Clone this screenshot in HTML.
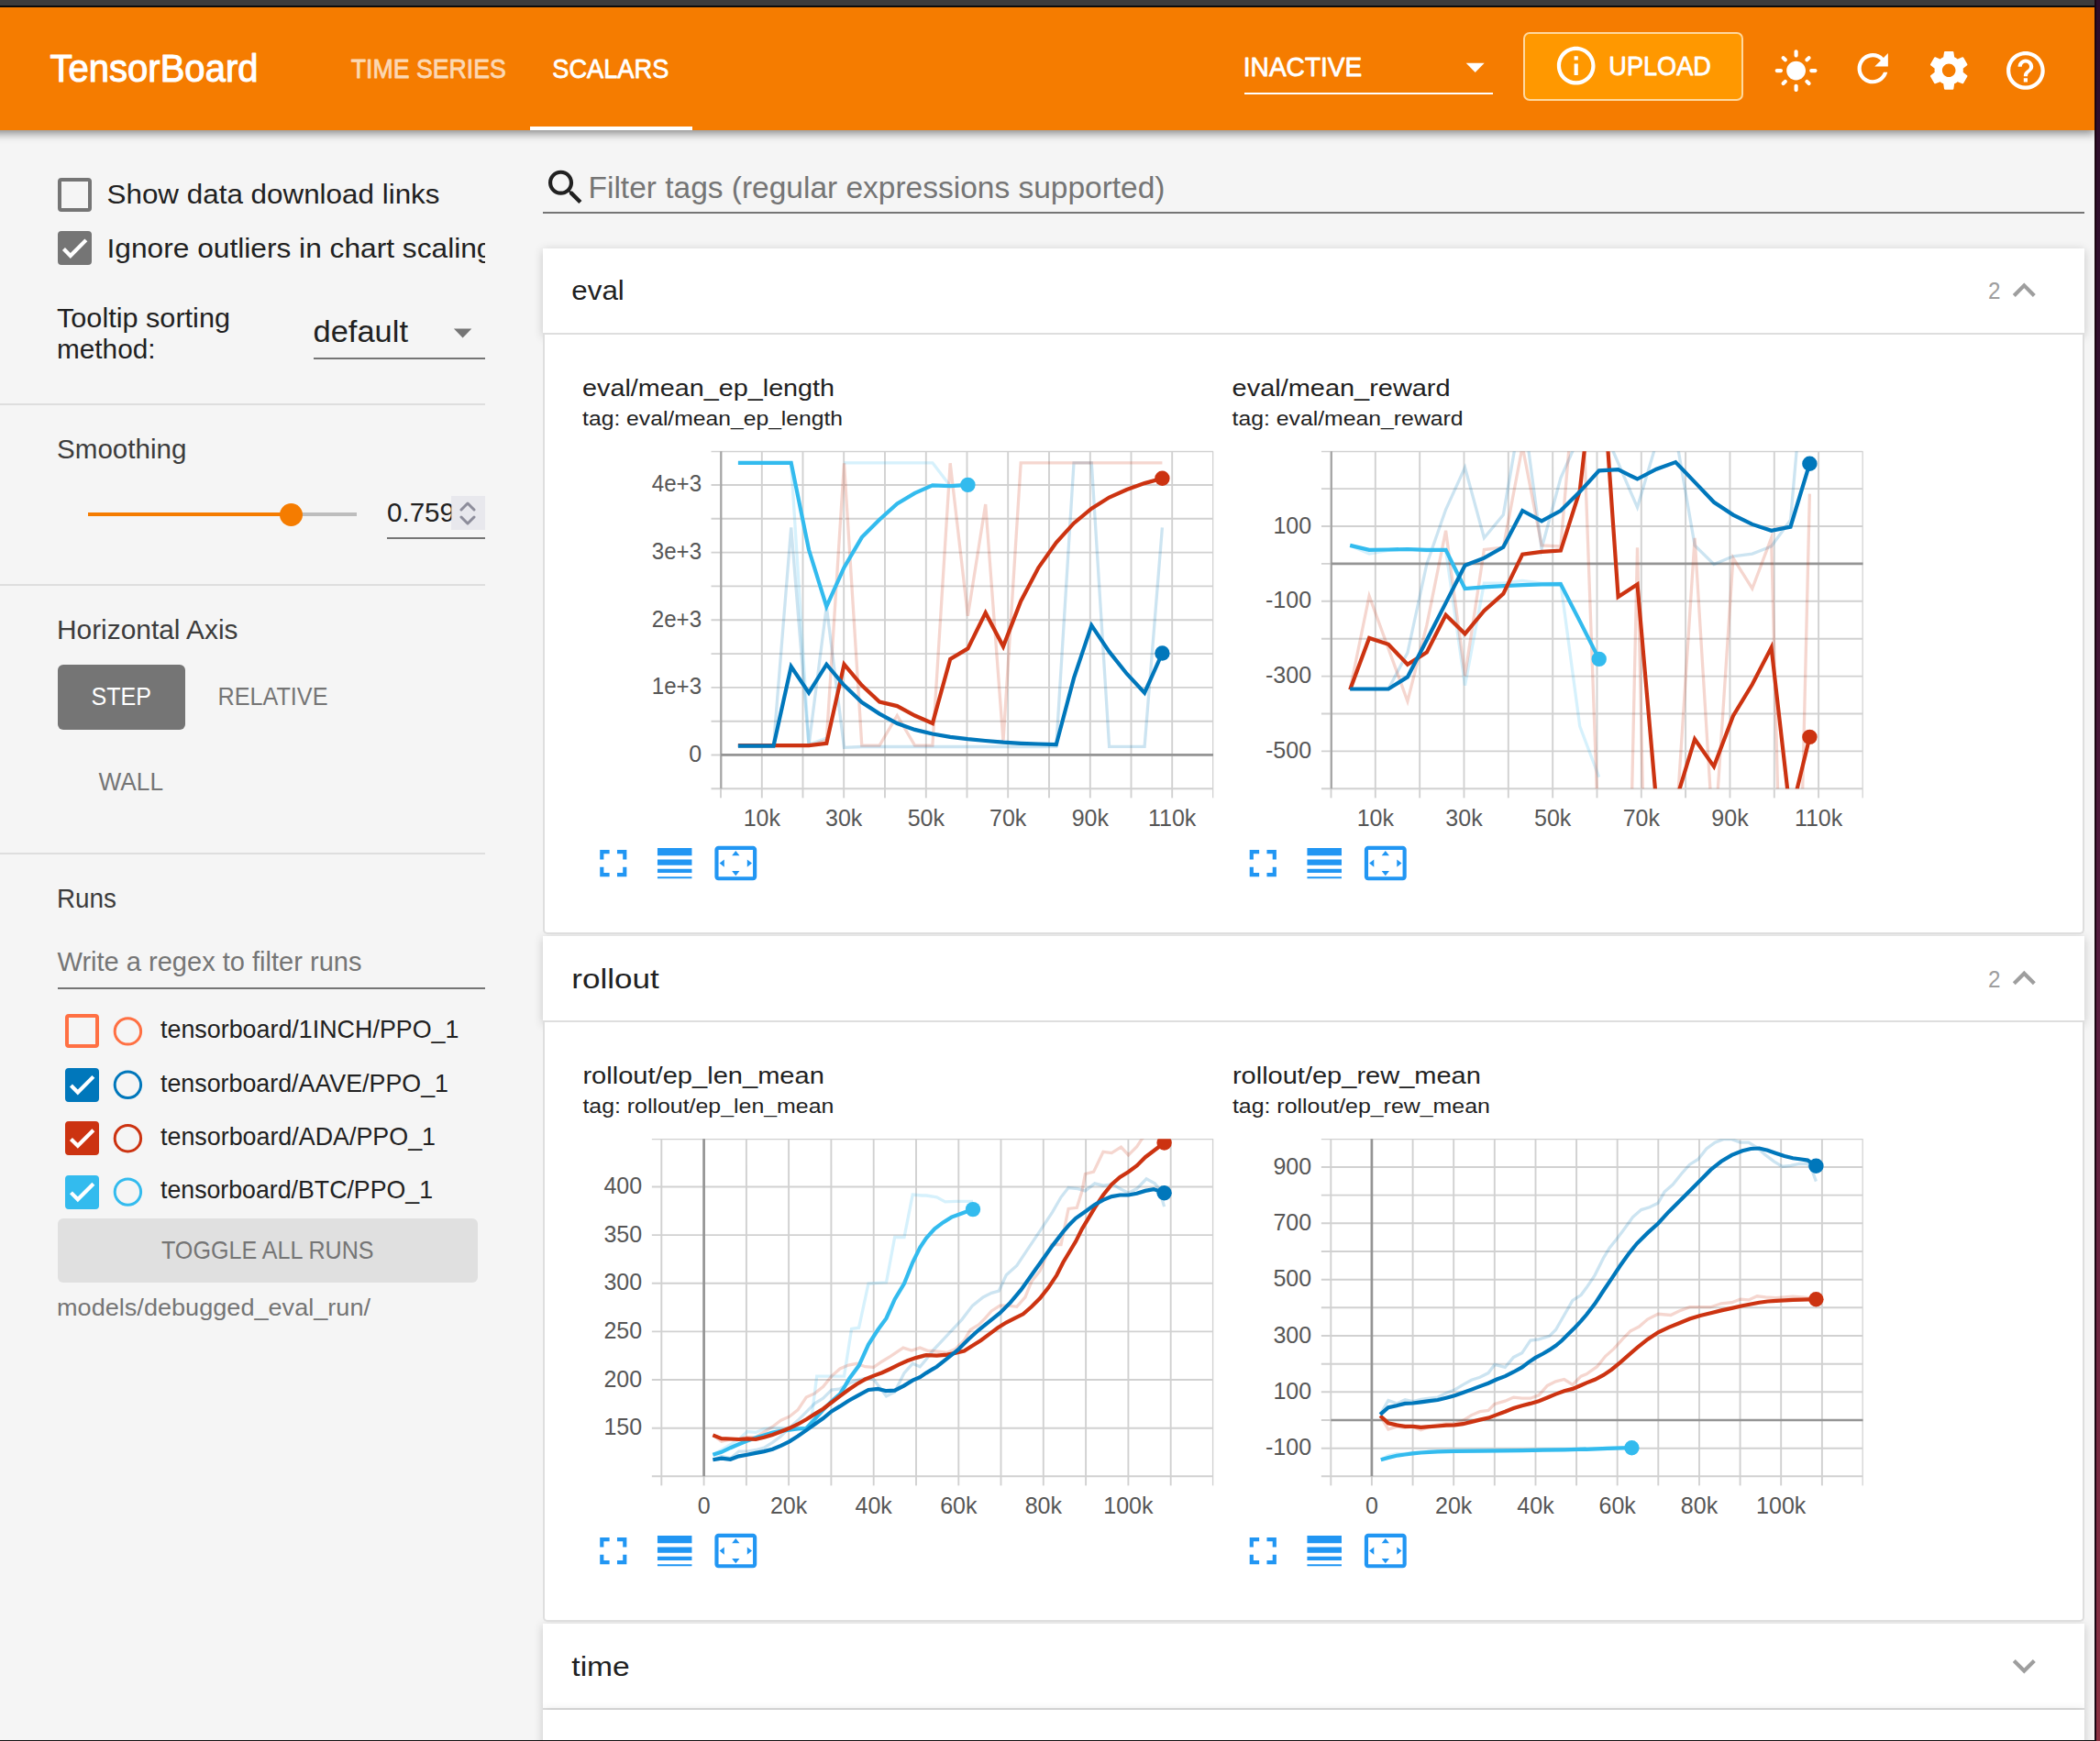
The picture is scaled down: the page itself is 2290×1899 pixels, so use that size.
<!DOCTYPE html>
<html lang="en"><head><meta charset="utf-8"><title>TensorBoard</title>
<style>
html,body{margin:0;padding:0}
body{width:2290px;height:1899px;position:relative;overflow:hidden;background:#f5f5f5;font-family:"Liberation Sans", "DejaVu Sans", sans-serif}
div{position:absolute;box-sizing:border-box}
#win-top{left:0;top:0;width:2290px;height:8px;background:#3c3c3c;border-bottom:2px solid #0b0b0b;z-index:9}
#win-right{left:2284px;top:0;width:6px;height:1899px;background:linear-gradient(180deg,#2c0d2a 0%,#35102f 25%,#541b3e 55%,#70263f 80%,#8c3143 100%);border-left:2px solid #1c0512;z-index:9}
#win-bottom{left:0;top:1897.6px;width:2286px;height:1.4px;background:#111;z-index:10}
#header{left:-30px;top:8px;width:2314px;height:134px;background:#f57c00;box-shadow:0 4px 9px rgba(0,0,0,.42);z-index:3}
#tabline{left:608px;top:129.5px;width:177px;height:4.5px;background:#fff}
#envline{left:1387px;top:92.5px;width:270.5px;height:2px;background:#fff}
#upload{left:1690.5px;top:26.5px;width:240px;height:75px;background:#ff9800;border:2px solid rgba(255,255,255,.62);border-radius:7px}
.cb{width:37px;height:37px;border-radius:4px;border:4px solid #757575}
.cb.on{background:#757575}
.hr{left:0;width:529px;height:2px;background:#dedede}
.ul{height:2px;background:#757575}
.rcb{left:71px;width:37px;height:37px;border-radius:4px;border:4.5px solid}
.card-h{left:592px;width:1681.4px;height:94.2px;background:#fff;box-shadow:0 2px 10px rgba(0,0,0,.19);border-bottom:2.2px solid #dedede;z-index:1}
.card-b{left:592px;width:1681.4px;background:#fff;border:2.2px solid #dedede;border-top:none;border-radius:0 0 5px 5px;z-index:2}
svg#ov{position:absolute;left:0;top:0;z-index:5;font-family:"Liberation Sans", "DejaVu Sans", sans-serif}
</style></head><body>
<div id="win-top"></div><div id="win-right"></div><div id="win-bottom"></div>
<div id="header"><div id="tabline"></div><div id="envline"></div><div id="upload"></div></div>
<div class="cb" style="left:63px;top:194px"></div>
<div class="cb on" style="left:63px;top:252.3px"></div>
<div class="ul" style="left:342px;top:389.6px;width:187px"></div>
<div class="hr" style="top:439.6px"></div>
<div style="left:96px;top:559px;width:222px;height:4.4px;background:#f57c00"></div>
<div style="left:318px;top:559px;width:70.6px;height:4.4px;background:#bdbdbd"></div>
<div style="left:305.1px;top:548.5px;width:25.4px;height:25.4px;border-radius:50%;background:#f57c00"></div>
<div style="left:492.3px;top:541.4px;width:36.7px;height:36.2px;background:#e8e8ed"></div>
<div class="ul" style="left:422px;top:586px;width:107px"></div>
<div class="hr" style="top:636.7px"></div>
<div style="left:62.9px;top:725.1px;width:139.3px;height:70.6px;background:#757575;border-radius:6px"></div>
<div class="hr" style="top:930.1px"></div>
<div class="ul" style="left:62.9px;top:1076.7px;width:466px"></div>
<div class="rcb" style="top:1106.4px;border-color:#ff7043;"></div>
<div class="rcb" style="top:1164.8px;border-color:#0077bb;background:#0077bb;"></div>
<div class="rcb" style="top:1223.2px;border-color:#cc3311;background:#cc3311;"></div>
<div class="rcb" style="top:1281.6px;border-color:#33bbee;background:#33bbee;"></div>
<div style="left:62.9px;top:1329.4px;width:458px;height:70px;background:#e0e0e0;border-radius:6px"></div>
<div class="ul" style="left:592px;top:231.2px;width:1681px"></div>
<div class="card-h" style="top:270.8px"></div><div class="card-b" style="top:365px;height:653.6px"></div>
<div class="card-h" style="top:1021.1px"></div><div class="card-b" style="top:1115.3px;height:653.3px"></div>
<div class="card-h" style="top:1771.1px"></div>
<div class="card-h" style="top:1865.3px;z-index:2"></div>
<svg id="ov" width="2290" height="1899" viewBox="0 0 2290 1899"><defs><clipPath id="gp0"><rect x="775.2" y="491.8" width="548.1" height="378.9"/></clipPath><clipPath id="cp0"><rect x="786.0" y="492.2" width="537.0" height="368.1"/></clipPath><clipPath id="gp1"><rect x="1440.7" y="491.8" width="591.1" height="378.9"/></clipPath><clipPath id="cp1"><rect x="1451.5" y="492.2" width="580.0" height="368.1"/></clipPath><clipPath id="gp2"><rect x="710.5" y="1242.0" width="612.8" height="378.8"/></clipPath><clipPath id="cp2"><rect x="721.3" y="1242.3" width="601.7" height="368.0"/></clipPath><clipPath id="gp3"><rect x="1440.5" y="1242.0" width="591.3" height="378.8"/></clipPath><clipPath id="cp3"><rect x="1451.3" y="1242.3" width="580.2" height="368.0"/></clipPath><clipPath id="numclip"><rect x="400" y="530" width="92.3" height="60"/></clipPath><clipPath id="sbclip"><rect x="0" y="240" width="529" height="60"/></clipPath></defs>
<text x="54.5" y="88.6" font-size="41.7" fill="#fff" textLength="227.0" lengthAdjust="spacingAndGlyphs" stroke="#fff" stroke-width="1.1" stroke-linejoin="round">TensorBoard</text>
<text x="382.8" y="85.0" font-size="29.2" fill="#fff" textLength="169.0" lengthAdjust="spacingAndGlyphs" stroke="#fff" stroke-width="0.8" stroke-linejoin="round" opacity="0.7">TIME SERIES</text>
<text x="602.3" y="85.0" font-size="29.2" fill="#fff" textLength="127.0" lengthAdjust="spacingAndGlyphs" stroke="#fff" stroke-width="0.8" stroke-linejoin="round">SCALARS</text>
<text x="1355.8" y="82.5" font-size="29.2" fill="#fff" textLength="129.5" lengthAdjust="spacingAndGlyphs" stroke="#fff" stroke-width="0.8" stroke-linejoin="round">INACTIVE</text>
<text x="1754.3" y="82.0" font-size="29.2" fill="#fff" textLength="111.5" lengthAdjust="spacingAndGlyphs" stroke="#fff" stroke-width="0.8" stroke-linejoin="round">UPLOAD</text>
<path transform="translate(1693.70 46.70) scale(2.0833)" fill="#fff" d="M11 17h2v-6h-2v6zm1-15C6.48 2 2 6.48 2 12s4.48 10 10 10 10-4.48 10-10S17.52 2 12 2zm0 18c-4.41 0-8-3.59-8-8s3.59-8 8-8 8 3.59 8 8-3.59 8-8 8zM11 9h2V7h-2v2z"/>
<path transform="translate(1933.60 52.10) scale(2.0833)" fill="#fff" d="M12,7c-2.76,0-5,2.24-5,5s2.24,5,5,5s5-2.24,5-5S14.76,7,12,7L12,7z M2,13l2,0c0.55,0,1-0.45,1-1s-0.45-1-1-1l-2,0 c-0.55,0-1,0.45-1,1S1.45,13,2,13z M20,13l2,0c0.55,0,1-0.45,1-1s-0.45-1-1-1l-2,0c-0.55,0-1,0.45-1,1S19.45,13,20,13z M11,2v2 c0,0.55,0.45,1,1,1s1-0.45,1-1V2c0-0.55-0.45-1-1-1S11,1.45,11,2z M11,20v2c0,0.55,0.45,1,1,1s1-0.45,1-1v-2c0-0.55-0.45-1-1-1 C11.45,19,11,19.45,11,20z M5.99,4.58c-0.39-0.39-1.03-0.39-1.41,0c-0.39,0.39-0.39,1.03,0,1.41l1.06,1.06 c0.39,0.39,1.03,0.39,1.41,0s0.39-1.03,0-1.41L5.99,4.58z M18.36,16.95c-0.39-0.39-1.03-0.39-1.41,0c-0.39,0.39-0.39,1.03,0,1.41 l1.06,1.06c0.39,0.39,1.03,0.39,1.41,0c0.39-0.39,0.39-1.03,0-1.41L18.36,16.95z M19.42,5.99c0.39-0.39,0.39-1.03,0-1.41 c-0.39-0.39-1.03-0.39-1.41,0l-1.06,1.06c-0.39,0.39-0.39,1.03,0,1.41s1.03,0.39,1.41,0L19.42,5.99z M7.05,18.36 c0.39-0.39,0.39-1.03,0-1.41c-0.39-0.39-1.03-0.39-1.41,0l-1.06,1.06c-0.39,0.39-0.39,1.03,0,1.41s1.03,0.39,1.41,0L7.05,18.36z"/>
<path transform="translate(2017.20 49.70) scale(2.0833)" fill="#fff" d="M17.65 6.35C16.2 4.9 14.21 4 12 4c-4.42 0-7.99 3.58-7.99 8s3.57 8 7.99 8c3.73 0 6.84-2.55 7.73-6h-2.08c-.82 2.33-3.04 4-5.65 4-3.31 0-6-2.69-6-6s2.69-6 6-6c1.66 0 3.14.69 4.22 1.78L13 11h7V4l-2.35 2.35z"/>
<path transform="translate(2100.20 51.80) scale(2.0833)" fill="#fff" d="M19.43 12.98c.04-.32.07-.64.07-.98s-.03-.66-.07-.98l2.11-1.65c.19-.15.24-.42.12-.64l-2-3.46c-.12-.22-.39-.3-.61-.22l-2.49 1c-.52-.4-1.08-.73-1.69-.98l-.38-2.65C14.46 2.18 14.25 2 14 2h-4c-.25 0-.46.18-.49.42l-.38 2.65c-.61.25-1.17.59-1.69.98l-2.49-1c-.23-.09-.49 0-.61.22l-2 3.46c-.13.22-.07.49.12.64l2.11 1.65c-.04.32-.07.65-.07.98s.03.66.07.98l-2.11 1.65c-.19.15-.24.42-.12.64l2 3.46c.12.22.39.3.61.22l2.49-1c.52.4 1.08.73 1.69.98l.38 2.65c.03.24.24.42.49.42h4c.25 0 .46-.18.49-.42l.38-2.65c.61-.25 1.17-.59 1.69-.98l2.49 1c.23.09.49 0 .61-.22l2-3.46c.12-.22.07-.49-.12-.64l-2.11-1.65zM12 15.5c-1.93 0-3.5-1.57-3.5-3.5s1.57-3.5 3.5-3.5 3.5 1.57 3.5 3.5-1.57 3.5-3.5 3.5z"/>
<path transform="translate(2183.90 51.90) scale(2.0833)" fill="#fff" d="M11 18h2v-2h-2v2zm1-16C6.48 2 2 6.48 2 12s4.48 10 10 10 10-4.48 10-10S17.52 2 12 2zm0 18c-4.41 0-8-3.59-8-8s3.59-8 8-8 8 3.59 8 8-3.59 8-8 8zm0-14c-2.21 0-4 1.79-4 4h2c0-1.1.9-2 2-2s2 .9 2 2c0 2-3 1.75-3 5h2c0-2.25 3-2.5 3-5 0-2.21-1.79-4-4-4z"/>
<path d="M1598.7 68.7h20l-10 10.3z" fill="#fff"/>
<text x="116.5" y="222.3" font-size="29.2" fill="#212121" textLength="363.0" lengthAdjust="spacingAndGlyphs">Show data download links</text>
<text x="116.5" y="281.4" font-size="29.2" fill="#212121" textLength="421.0" lengthAdjust="spacingAndGlyphs" clip-path="url(#sbclip)">Ignore outliers in chart scaling</text>
<polyline points="69.47,271.58 76.81,278.93 93.84,261.89" fill="none" stroke="#fff" stroke-width="4.2"/>
<text x="62.0" y="357.0" font-size="29.2" fill="#212121" textLength="189.0" lengthAdjust="spacingAndGlyphs">Tooltip sorting</text>
<text x="62.0" y="391.4" font-size="29.2" fill="#212121" textLength="107.5" lengthAdjust="spacingAndGlyphs">method:</text>
<text x="341.5" y="372.9" font-size="33.3" fill="#212121" textLength="103.5" lengthAdjust="spacingAndGlyphs">default</text>
<path d="M494.9 358.6h19.4l-9.7 10z" fill="#757575"/>
<text x="62.0" y="500.0" font-size="29.2" fill="#3c3c3c" textLength="141.5" lengthAdjust="spacingAndGlyphs">Smoothing</text>
<text x="422.0" y="569.3" font-size="29.2" fill="#212121" textLength="74.0" lengthAdjust="spacingAndGlyphs" clip-path="url(#numclip)">0.759</text>
<path d="M503 556l7-7 7 7M503 564l7 7 7-7" fill="none" stroke="#8d8d9b" stroke-width="3" stroke-linecap="round" stroke-linejoin="round"/>
<text x="62.0" y="697.0" font-size="29.2" fill="#3c3c3c" textLength="197.5" lengthAdjust="spacingAndGlyphs">Horizontal Axis</text>
<text x="99.5" y="769.1" font-size="27.1" fill="#fff" textLength="65.5" lengthAdjust="spacingAndGlyphs">STEP</text>
<text x="237.5" y="769.1" font-size="27.1" fill="#757575" textLength="120.0" lengthAdjust="spacingAndGlyphs">RELATIVE</text>
<text x="107.5" y="862.3" font-size="27.1" fill="#757575" textLength="70.5" lengthAdjust="spacingAndGlyphs">WALL</text>
<text x="62.0" y="990.0" font-size="29.2" fill="#3c3c3c" textLength="65.0" lengthAdjust="spacingAndGlyphs">Runs</text>
<text x="62.5" y="1059.1" font-size="29.2" fill="#757575" textLength="332.0" lengthAdjust="spacingAndGlyphs">Write a regex to filter runs</text>
<text x="175.0" y="1132.2" font-size="27.1" fill="#212121" textLength="325.5" lengthAdjust="spacingAndGlyphs">tensorboard/1INCH/PPO_1</text>
<circle cx="139.4" cy="1124.9" r="14.2" fill="none" stroke="#ff7043" stroke-width="3"/>
<text x="175.0" y="1190.6" font-size="27.1" fill="#212121" textLength="314.0" lengthAdjust="spacingAndGlyphs">tensorboard/AAVE/PPO_1</text>
<circle cx="139.4" cy="1183.3" r="14.2" fill="none" stroke="#0077bb" stroke-width="3"/>
<polyline points="77.47,1184.08 84.81,1191.43 101.84,1174.39" fill="none" stroke="#fff" stroke-width="4.2"/>
<text x="175.0" y="1249.0" font-size="27.1" fill="#212121" textLength="300.0" lengthAdjust="spacingAndGlyphs">tensorboard/ADA/PPO_1</text>
<circle cx="139.4" cy="1241.7" r="14.2" fill="none" stroke="#cc3311" stroke-width="3"/>
<polyline points="77.47,1242.48 84.81,1249.83 101.84,1232.79" fill="none" stroke="#fff" stroke-width="4.2"/>
<text x="175.0" y="1307.4" font-size="27.1" fill="#212121" textLength="297.0" lengthAdjust="spacingAndGlyphs">tensorboard/BTC/PPO_1</text>
<circle cx="139.4" cy="1300.1" r="14.2" fill="none" stroke="#33bbee" stroke-width="3"/>
<polyline points="77.47,1300.88 84.81,1308.23 101.84,1291.19" fill="none" stroke="#fff" stroke-width="4.2"/>
<text x="176.0" y="1372.9" font-size="27.1" fill="#757575" textLength="231.5" lengthAdjust="spacingAndGlyphs">TOGGLE ALL RUNS</text>
<text x="62.0" y="1434.9" font-size="25" fill="#757575" textLength="342.0" lengthAdjust="spacingAndGlyphs">models/debugged_eval_run/</text>
<path transform="translate(591.75 179.40) scale(2.0833)" fill="#212121" d="M15.5 14h-.79l-.28-.27C15.41 12.59 16 11.11 16 9.5 16 5.91 13.09 3 9.5 3S3 5.91 3 9.5 5.91 16 9.5 16c1.61 0 3.09-.59 4.23-1.57l.27.28v.79l5 4.99L20.49 19l-4.99-5zm-6 0C7.01 14 5 11.99 5 9.5S7.01 5 9.5 5 14 7.01 14 9.5 11.99 14 9.5 14z"/>
<text x="641.5" y="215.6" font-size="33.3" fill="#757575" textLength="629.0" lengthAdjust="spacingAndGlyphs">Filter tags (regular expressions supported)</text>
<text x="623.3" y="327.3" font-size="29.2" fill="#212121" textLength="57.5" lengthAdjust="spacingAndGlyphs">eval</text>
<text x="2168.0" y="326.2" font-size="25" fill="#9e9e9e" textLength="13.5" lengthAdjust="spacingAndGlyphs">2</text>
<path transform="translate(2182.30 291.80) scale(2.0833)" fill="#9e9e9e" d="M12 8l-6 6 1.41 1.41L12 10.83l4.59 4.58L18 14z"/>
<text x="623.3" y="1077.6" font-size="29.2" fill="#212121" textLength="95.5" lengthAdjust="spacingAndGlyphs">rollout</text>
<text x="2168.0" y="1076.5" font-size="25" fill="#9e9e9e" textLength="13.5" lengthAdjust="spacingAndGlyphs">2</text>
<path transform="translate(2182.30 1042.10) scale(2.0833)" fill="#9e9e9e" d="M12 8l-6 6 1.41 1.41L12 10.83l4.59 4.58L18 14z"/>
<text x="623.3" y="1827.6" font-size="29.2" fill="#212121" textLength="63.5" lengthAdjust="spacingAndGlyphs">time</text>
<path transform="translate(2182.30 1792.10) scale(2.0833)" fill="#9e9e9e" d="M16.59 8.59L12 13.17 7.41 8.59 6 10l6 6 6-6z"/>
<text x="635.1" y="432.1" font-size="25" fill="#212121" textLength="275.0" lengthAdjust="spacingAndGlyphs">eval/mean_ep_length</text>
<text x="635.1" y="464.2" font-size="22.9" fill="#212121" textLength="284.0" lengthAdjust="spacingAndGlyphs">tag: eval/mean_ep_length</text>
<path clip-path="url(#gp0)" d="M786.0 492.2V870.6M830.8 492.2V870.6M875.5 492.2V870.6M920.2 492.2V870.6M965.0 492.2V870.6M1009.8 492.2V870.6M1054.5 492.2V870.6M1099.2 492.2V870.6M1144.0 492.2V870.6M1188.8 492.2V870.6M1233.5 492.2V870.6M1278.2 492.2V870.6M1323.0 492.2V870.6M775.4 492.2H1323.0M775.4 529.0H1323.0M775.4 565.8H1323.0M775.4 602.6H1323.0M775.4 639.4H1323.0M775.4 676.2H1323.0M775.4 713.1H1323.0M775.4 749.9H1323.0M775.4 786.7H1323.0M775.4 823.5H1323.0M775.4 860.3H1323.0" fill="none" stroke="#3c3c3c" stroke-opacity="0.235" stroke-width="1.9"/>
<path d="M786.35 492.2V860.3" fill="none" stroke="#a4a4a4" stroke-width="2.1"/>
<path d="M786.0 823.4H1323.0" fill="none" stroke="#959595" stroke-width="2.7"/>
<text x="765.1" y="536.4" font-size="25" fill="#565656" textLength="54.3" lengthAdjust="spacingAndGlyphs" text-anchor="end">4e+3</text>
<text x="765.1" y="610.0" font-size="25" fill="#565656" textLength="54.3" lengthAdjust="spacingAndGlyphs" text-anchor="end">3e+3</text>
<text x="765.1" y="683.6" font-size="25" fill="#565656" textLength="54.3" lengthAdjust="spacingAndGlyphs" text-anchor="end">2e+3</text>
<text x="765.1" y="757.3" font-size="25" fill="#565656" textLength="54.3" lengthAdjust="spacingAndGlyphs" text-anchor="end">1e+3</text>
<text x="765.1" y="831.0" font-size="25" fill="#565656" text-anchor="end">0</text>
<text x="830.8" y="900.9" font-size="25" fill="#565656" text-anchor="middle">10k</text>
<text x="920.2" y="900.9" font-size="25" fill="#565656" text-anchor="middle">30k</text>
<text x="1009.8" y="900.9" font-size="25" fill="#565656" text-anchor="middle">50k</text>
<text x="1099.2" y="900.9" font-size="25" fill="#565656" text-anchor="middle">70k</text>
<text x="1188.8" y="900.9" font-size="25" fill="#565656" text-anchor="middle">90k</text>
<text x="1278.2" y="900.9" font-size="25" fill="#565656" text-anchor="middle">110k</text>
<g clip-path="url(#cp0)" fill="none" stroke-linejoin="miter" stroke-miterlimit="6">
<polyline points="804.9,504.8 824.2,504.8 843.5,504.8 862.7,504.8 882.0,812.0 901.3,805.1" stroke="#33bbee" stroke-opacity="0.2" stroke-width="3.3"/>
<polyline points="920.5,504.8 939.8,504.8 959.1,504.8 978.3,504.8 997.6,504.8 1016.9,504.8 1036.2,530.1 1055.4,528.9" stroke="#33bbee" stroke-opacity="0.2" stroke-width="3.3"/>
<polyline points="804.9,813.6 824.2,813.6 843.5,813.6 862.7,575.3 882.0,813.1 901.3,661.5 920.5,815.4 939.8,814.5 959.1,814.5 978.3,814.5 997.6,814.5 1016.9,814.5 1036.2,814.5 1055.4,814.5 1074.7,814.5 1094.0,814.5 1113.2,814.5 1132.5,814.5 1151.8,814.3 1171.0,504.8 1190.3,504.8 1209.6,814.3 1228.8,814.3 1248.1,814.3 1267.4,575.3" stroke="#0077bb" stroke-opacity="0.2" stroke-width="3.3"/>
<polyline points="804.9,813.1 824.2,813.1 843.5,813.1 862.7,813.1 882.0,813.1 901.3,807.4 920.5,505.3 939.8,813.1 959.1,813.1 978.3,780.5 997.6,813.1 1016.9,813.1 1036.2,505.3 1055.4,671.8 1074.7,550.1 1094.0,808.5 1113.2,504.8 1132.5,504.8 1151.8,504.8 1171.0,504.8 1190.3,504.8 1209.6,504.8 1228.8,504.8 1248.1,504.8 1267.4,504.8" stroke="#cc3311" stroke-opacity="0.2" stroke-width="3.3"/>
<polyline points="804.9,504.8 824.2,504.8 843.5,504.8 862.7,504.8 882.0,599.5 901.3,661.5 920.5,619.0 939.8,586.1 959.1,566.8 978.3,549.4 997.6,537.9 1016.9,529.4 1036.2,530.1 1055.4,528.9" stroke="#33bbee" stroke-width="4.2"/>
<polyline points="804.9,813.1 824.2,813.1 843.5,813.1 862.7,813.1 882.0,813.1 901.3,810.8 920.5,724.7 939.8,747.6 959.1,765.6 978.3,770.1 997.6,780.5 1016.9,789.0 1036.2,718.9 1055.4,707.4 1074.7,668.4 1094.0,705.1 1113.2,655.7 1132.5,619.0 1151.8,591.9 1171.0,570.7 1190.3,554.7 1209.6,542.5 1228.8,534.0 1248.1,527.1 1267.4,521.8" stroke="#cc3311" stroke-width="4.2"/>
<polyline points="804.9,813.6 824.2,813.6 843.5,813.6 862.7,727.0 882.0,755.7 901.3,724.7 920.5,747.6 939.8,766.0 959.1,778.6 978.3,789.0 997.6,795.9 1016.9,800.5 1036.2,803.9 1055.4,806.2 1074.7,808.0 1094.0,809.7 1113.2,810.8 1132.5,811.5 1151.8,812.2 1171.0,739.6 1190.3,682.2 1209.6,710.9 1228.8,735.0 1248.1,755.7 1267.4,712.5" stroke="#0077bb" stroke-width="4.2"/>
<circle cx="1055.4" cy="528.9" r="8.2" fill="#33bbee" stroke="none"/>
<circle cx="1267.4" cy="521.8" r="8.2" fill="#cc3311" stroke="none"/>
<circle cx="1267.4" cy="712.5" r="8.2" fill="#0077bb" stroke="none"/>
</g>
<path transform="translate(643.80 916.60) scale(2.0833)" fill="#2196f3" d="M7 14H5v5h5v-2H7v-3zm-2-4h2V7h3V5H5v5zm12 7h-3v2h5v-5h-2v3zM14 5v2h3v3h2V5h-5z"/>
<path transform="translate(710.70 916.60) scale(2.0833)" fill="#2196f3" d="M3 17h18v-2H3v2zm0 3h18v-1H3v1zm0-7h18v-3H3v3zm0-9v4h18V4H3z"/>
<path transform="translate(777.30 916.60) scale(2.0833)" fill="#2196f3" d="M12.01 5.5L10 8h4l-1.99-2.5zM18 10v4l2.5-1.99L18 10zM6 10l-2.5 2.01L6 14v-4zm8 6h-4l2.01 2.5L14 16zm7-13H3c-1.1 0-2 .9-2 2v14c0 1.1.9 2 2 2h18c1.1 0 2-.9 2-2V5c0-1.1-.9-2-2-2zm0 16.01H3V4.99h18v14.02z"/>
<text x="1343.6" y="432.1" font-size="25" fill="#212121" textLength="238.0" lengthAdjust="spacingAndGlyphs">eval/mean_reward</text>
<text x="1343.6" y="464.2" font-size="22.9" fill="#212121" textLength="252.0" lengthAdjust="spacingAndGlyphs">tag: eval/mean_reward</text>
<path clip-path="url(#gp1)" d="M1451.5 492.2V870.6M1499.8 492.2V870.6M1548.2 492.2V870.6M1596.5 492.2V870.6M1644.8 492.2V870.6M1693.2 492.2V870.6M1741.5 492.2V870.6M1789.8 492.2V870.6M1838.1 492.2V870.6M1886.5 492.2V870.6M1934.8 492.2V870.6M1983.1 492.2V870.6M2031.5 492.2V870.6M1440.9 492.2H2031.5M1440.9 533.1H2031.5M1440.9 574.0H2031.5M1440.9 614.9H2031.5M1440.9 655.8H2031.5M1440.9 696.7H2031.5M1440.9 737.6H2031.5M1440.9 778.5H2031.5M1440.9 819.4H2031.5M1440.9 860.3H2031.5" fill="none" stroke="#3c3c3c" stroke-opacity="0.235" stroke-width="1.9"/>
<path d="M1451.85 492.2V860.3" fill="none" stroke="#a4a4a4" stroke-width="2.1"/>
<path d="M1451.5 614.9H2031.5" fill="none" stroke="#959595" stroke-width="2.7"/>
<text x="1430.1" y="581.6" font-size="25" fill="#565656" text-anchor="end">100</text>
<text x="1430.1" y="663.4" font-size="25" fill="#565656" text-anchor="end">-100</text>
<text x="1430.1" y="745.2" font-size="25" fill="#565656" text-anchor="end">-300</text>
<text x="1430.1" y="827.0" font-size="25" fill="#565656" text-anchor="end">-500</text>
<text x="1499.8" y="900.9" font-size="25" fill="#565656" text-anchor="middle">10k</text>
<text x="1596.5" y="900.9" font-size="25" fill="#565656" text-anchor="middle">30k</text>
<text x="1693.2" y="900.9" font-size="25" fill="#565656" text-anchor="middle">50k</text>
<text x="1789.8" y="900.9" font-size="25" fill="#565656" text-anchor="middle">70k</text>
<text x="1886.5" y="900.9" font-size="25" fill="#565656" text-anchor="middle">90k</text>
<text x="1983.1" y="900.9" font-size="25" fill="#565656" text-anchor="middle">110k</text>
<g clip-path="url(#cp1)" fill="none" stroke-linejoin="miter" stroke-miterlimit="6">
<polyline points="1472.2,594.9 1493.1,604.1 1514.0,600.4 1534.9,599.5 1555.8,600.8 1576.6,599.9 1597.5,747.6 1618.4,636.2 1639.3,636.2 1660.2,633.5 1681.1,636.2 1701.9,636.2 1722.8,792.4 1743.7,847.6" stroke="#33bbee" stroke-opacity="0.2" stroke-width="3.3"/>
<polyline points="1472.2,751.5 1493.1,751.5 1514.0,751.5 1534.9,712.0 1555.8,615.5 1576.6,555.8 1597.5,509.9 1618.4,586.8 1639.3,561.6 1660.2,440.9 1681.1,598.3 1701.9,521.4 1722.8,474.3 1743.7,457.0 1764.6,505.0 1785.5,553.5 1806.3,483.2 1827.2,474.0 1848.1,594.9 1869.0,615.5 1889.9,606.8 1910.8,604.1 1931.6,596.0 1952.5,567.3 1973.4,329.5" stroke="#0077bb" stroke-opacity="0.2" stroke-width="3.3"/>
<polyline points="1472.2,752.2 1493.1,650.0 1514.0,707.4 1534.9,764.9 1555.8,682.2 1576.6,578.8 1597.5,737.3 1618.4,599.5 1639.3,597.2 1660.2,486.9 1681.1,594.9 1701.9,596.0 1722.8,349.5 1743.7,928.4 1764.6,1544.1 1785.5,597.2 1806.3,1536.7 1827.2,908.4 1848.1,586.8 1869.0,926.6 1889.9,608.6 1910.8,642.0 1931.6,586.8 1952.5,1415.0 1973.4,538.6" stroke="#cc3311" stroke-opacity="0.2" stroke-width="3.3"/>
<polyline points="1472.2,594.9 1493.1,599.9 1514.0,599.5 1534.9,599.0 1555.8,599.9 1576.6,599.9 1597.5,642.0 1618.4,640.3 1639.3,639.2 1660.2,638.1 1681.1,637.4 1701.9,637.1 1722.8,677.6 1743.7,718.9" stroke="#33bbee" stroke-width="4.2"/>
<polyline points="1472.2,752.2 1493.1,695.9 1514.0,702.8 1534.9,724.7 1555.8,711.6 1576.6,670.7 1597.5,691.3 1618.4,666.1 1639.3,647.7 1660.2,604.7 1681.1,601.8 1701.9,600.6 1722.8,535.1 1743.7,351.4 1764.6,651.1 1785.5,637.4 1806.3,876.5 1827.2,874.7 1848.1,806.2 1869.0,836.1 1889.9,780.9 1910.8,746.5 1931.6,706.3 1952.5,890.1 1973.4,803.9" stroke="#cc3311" stroke-width="4.2"/>
<polyline points="1472.2,751.5 1493.1,751.5 1514.0,751.5 1534.9,738.4 1555.8,698.2 1576.6,657.6 1597.5,616.7 1618.4,608.6 1639.3,596.7 1660.2,557.0 1681.1,568.4 1701.9,557.0 1722.8,536.3 1743.7,513.3 1764.6,512.2 1785.5,522.5 1806.3,511.7 1827.2,504.1 1848.1,525.9 1869.0,547.8 1889.9,561.6 1910.8,571.9 1931.6,578.8 1952.5,574.6 1973.4,505.7" stroke="#0077bb" stroke-width="4.2"/>
<circle cx="1743.7" cy="718.9" r="8.2" fill="#33bbee" stroke="none"/>
<circle cx="1973.4" cy="803.9" r="8.2" fill="#cc3311" stroke="none"/>
<circle cx="1973.4" cy="505.7" r="8.2" fill="#0077bb" stroke="none"/>
</g>
<path transform="translate(1352.30 916.60) scale(2.0833)" fill="#2196f3" d="M7 14H5v5h5v-2H7v-3zm-2-4h2V7h3V5H5v5zm12 7h-3v2h5v-5h-2v3zM14 5v2h3v3h2V5h-5z"/>
<path transform="translate(1419.20 916.60) scale(2.0833)" fill="#2196f3" d="M3 17h18v-2H3v2zm0 3h18v-1H3v1zm0-7h18v-3H3v3zm0-9v4h18V4H3z"/>
<path transform="translate(1485.80 916.60) scale(2.0833)" fill="#2196f3" d="M12.01 5.5L10 8h4l-1.99-2.5zM18 10v4l2.5-1.99L18 10zM6 10l-2.5 2.01L6 14v-4zm8 6h-4l2.01 2.5L14 16zm7-13H3c-1.1 0-2 .9-2 2v14c0 1.1.9 2 2 2h18c1.1 0 2-.9 2-2V5c0-1.1-.9-2-2-2zm0 16.01H3V4.99h18v14.02z"/>
<text x="635.4" y="1182.1" font-size="25" fill="#212121" textLength="263.5" lengthAdjust="spacingAndGlyphs">rollout/ep_len_mean</text>
<text x="635.4" y="1214.2" font-size="22.9" fill="#212121" textLength="274.0" lengthAdjust="spacingAndGlyphs">tag: rollout/ep_len_mean</text>
<path clip-path="url(#gp2)" d="M721.3 1242.3V1620.6M767.6 1242.3V1620.6M813.9 1242.3V1620.6M860.1 1242.3V1620.6M906.4 1242.3V1620.6M952.7 1242.3V1620.6M999.0 1242.3V1620.6M1045.3 1242.3V1620.6M1091.5 1242.3V1620.6M1137.8 1242.3V1620.6M1184.1 1242.3V1620.6M1230.4 1242.3V1620.6M1276.7 1242.3V1620.6M1322.9 1242.3V1620.6M710.7 1242.3H1323.0M710.7 1294.5H1323.0M710.7 1347.1H1323.0M710.7 1399.8H1323.0M710.7 1452.4H1323.0M710.7 1505.0H1323.0M710.7 1557.7H1323.0M710.7 1610.3H1323.0" fill="none" stroke="#3c3c3c" stroke-opacity="0.235" stroke-width="1.9"/>
<path d="M767.6 1242.3V1610.3" fill="none" stroke="#959595" stroke-width="2.7"/>
<text x="700.1" y="1302.1" font-size="25" fill="#565656" text-anchor="end">400</text>
<text x="700.1" y="1354.7" font-size="25" fill="#565656" text-anchor="end">350</text>
<text x="700.1" y="1407.4" font-size="25" fill="#565656" text-anchor="end">300</text>
<text x="700.1" y="1460.0" font-size="25" fill="#565656" text-anchor="end">250</text>
<text x="700.1" y="1512.6" font-size="25" fill="#565656" text-anchor="end">200</text>
<text x="700.1" y="1565.2" font-size="25" fill="#565656" text-anchor="end">150</text>
<text x="767.6" y="1650.9" font-size="25" fill="#565656" text-anchor="middle">0</text>
<text x="860.1" y="1650.9" font-size="25" fill="#565656" text-anchor="middle">20k</text>
<text x="952.7" y="1650.9" font-size="25" fill="#565656" text-anchor="middle">40k</text>
<text x="1045.3" y="1650.9" font-size="25" fill="#565656" text-anchor="middle">60k</text>
<text x="1137.8" y="1650.9" font-size="25" fill="#565656" text-anchor="middle">80k</text>
<text x="1230.4" y="1650.9" font-size="25" fill="#565656" text-anchor="middle">100k</text>
<g clip-path="url(#cp2)" fill="none" stroke-linejoin="miter" stroke-miterlimit="6">
<polyline points="777.4,1586.8 786.8,1581.5 796.5,1575.7 805.7,1570.0 814.9,1561.5 824.1,1562.4 833.2,1558.5 842.4,1557.4 851.6,1557.4 870.0,1557.4 879.2,1557.4 883.8,1556.2 890.7,1501.1 899.9,1501.1 920.5,1501.1 928.6,1449.4 936.6,1448.2 947.0,1400.0 966.5,1398.8 975.7,1349.5 986.0,1349.5 995.2,1303.1 1005.5,1304.0 1010.0,1304.0 1021.5,1305.8 1030.7,1310.9 1042.2,1310.4 1061.0,1310.4" stroke="#33bbee" stroke-opacity="0.2" stroke-width="3.3"/>
<polyline points="777.4,1592.3 786.8,1588.4 796.5,1590.7 805.7,1583.1 814.9,1583.1 824.1,1581.5 833.2,1579.2 842.4,1573.4 851.6,1566.5 860.8,1557.4 870.0,1549.3 879.2,1540.1 888.4,1530.9 897.6,1525.2 906.8,1516.0 915.9,1514.9 925.1,1509.1 934.3,1505.7 943.5,1503.4 952.7,1504.5 966.5,1522.9 975.7,1518.3 986.0,1497.6 995.2,1487.3 1003.2,1490.7 1010.0,1482.7 1016.9,1473.5 1033.0,1456.3 1049.1,1439.1 1060.5,1424.1 1072.0,1414.9 1081.2,1410.3 1089.3,1408.0 1097.3,1390.8 1108.8,1380.5 1120.3,1363.2 1134.1,1342.6 1147.8,1321.9 1157.0,1305.8 1165.1,1295.5 1175.4,1296.6 1183.4,1298.9 1193.8,1290.9 1203.0,1293.2 1213.3,1291.6 1221.3,1296.6 1230.5,1301.2 1239.7,1296.6 1250.1,1285.8 1259.3,1290.9 1263.8,1296.6 1269.6,1316.1" stroke="#0077bb" stroke-opacity="0.2" stroke-width="3.3"/>
<polyline points="777.4,1565.4 786.8,1572.3 796.5,1570.0 805.7,1569.5 814.9,1567.7 824.1,1567.7 833.2,1562.0 842.4,1556.2 851.6,1549.3 860.8,1545.2 870.0,1537.8 879.2,1524.1 888.4,1519.9 897.6,1512.6 906.8,1501.1 915.9,1493.0 925.1,1489.1 934.3,1487.3 943.5,1490.7 952.7,1491.4 961.9,1485.0 971.1,1479.3 984.9,1470.1 994.1,1473.1 1003.2,1470.1 1012.3,1473.5 1016.9,1473.5 1033.0,1475.3 1042.2,1471.2 1051.4,1462.0 1058.2,1450.5 1067.4,1444.8 1074.3,1437.9 1081.2,1429.9 1090.4,1424.1 1099.6,1424.1 1108.8,1425.3 1118.0,1414.9 1124.9,1397.7 1134.1,1386.2 1140.9,1370.1 1146.7,1357.5 1157.0,1357.5 1165.1,1318.4 1174.3,1317.3 1180.0,1298.9 1183.4,1280.5 1192.6,1278.2 1203.0,1256.4 1212.2,1257.6 1222.5,1251.1 1230.5,1259.9 1239.7,1250.7 1245.5,1241.9 1269.6,1223.1" stroke="#cc3311" stroke-opacity="0.2" stroke-width="3.3"/>
<polyline points="777.4,1586.8 786.8,1583.8 796.5,1579.2 805.7,1575.3 814.9,1571.6 824.1,1568.2 833.2,1565.4 842.4,1562.6 851.6,1560.8 860.8,1559.7 870.0,1558.5 879.2,1558.0 888.4,1548.2 897.6,1537.8 906.8,1528.6 915.9,1520.6 921.7,1511.4 926.3,1503.4 936.6,1489.6 947.0,1466.6 957.3,1450.5 966.5,1437.9 975.7,1417.2 986.0,1400.0 995.2,1377.0 1003.2,1360.9 1010.0,1350.6 1019.2,1340.3 1028.4,1333.4 1037.6,1327.6 1046.8,1324.2 1061.0,1319.1" stroke="#33bbee" stroke-width="4.2"/>
<polyline points="777.4,1565.4 786.8,1569.1 796.5,1569.5 805.7,1570.0 814.9,1569.3 824.1,1569.8 833.2,1567.7 842.4,1564.9 851.6,1561.5 860.8,1557.8 870.0,1553.5 879.2,1548.2 888.4,1542.4 897.6,1536.7 906.8,1529.8 915.9,1522.9 925.1,1516.0 934.3,1509.8 943.5,1504.5 952.7,1500.6 961.9,1497.2 971.1,1493.0 980.3,1488.4 989.5,1484.3 998.6,1481.1 1007.8,1478.6 1010.0,1478.1 1021.5,1478.6 1033.0,1477.6 1042.2,1475.8 1051.4,1473.5 1060.5,1467.8 1069.7,1462.0 1078.9,1455.1 1088.1,1448.2 1097.3,1442.5 1106.5,1437.9 1115.7,1433.3 1124.9,1425.3 1134.1,1416.1 1143.2,1404.6 1152.4,1390.8 1159.3,1377.0 1166.2,1365.5 1173.1,1354.1 1180.0,1340.3 1186.9,1328.8 1193.8,1317.3 1203.0,1303.5 1212.2,1292.0 1221.3,1284.0 1230.5,1278.2 1239.7,1271.4 1248.9,1262.2 1258.1,1255.3 1269.6,1246.5" stroke="#cc3311" stroke-width="4.2"/>
<polyline points="777.4,1592.3 786.8,1590.7 796.5,1591.8 805.7,1588.4 814.9,1586.8 824.1,1584.9 833.2,1583.1 842.4,1580.8 851.6,1576.9 860.8,1572.3 870.0,1566.5 879.2,1560.1 888.4,1553.5 897.6,1547.0 906.8,1539.4 915.9,1533.9 925.1,1528.0 934.3,1522.9 947.0,1516.0 957.3,1514.9 966.5,1517.2 975.7,1516.7 986.0,1511.4 995.2,1505.7 1003.2,1502.2 1010.0,1497.6 1021.5,1490.7 1033.0,1481.6 1044.5,1472.4 1055.9,1460.9 1067.4,1450.5 1078.9,1441.3 1090.4,1432.2 1101.9,1420.7 1113.4,1406.9 1124.9,1390.8 1136.3,1374.7 1147.8,1358.6 1159.3,1343.7 1166.2,1335.7 1173.1,1328.8 1184.6,1320.7 1193.8,1313.9 1203.0,1308.8 1212.2,1305.1 1221.3,1303.5 1230.5,1303.5 1239.7,1301.7 1248.9,1298.9 1258.1,1297.1 1269.6,1301.2" stroke="#0077bb" stroke-width="4.2"/>
<circle cx="1061.0" cy="1319.1" r="8.2" fill="#33bbee" stroke="none"/>
<circle cx="1269.6" cy="1246.5" r="8.2" fill="#cc3311" stroke="none"/>
<circle cx="1269.6" cy="1301.2" r="8.2" fill="#0077bb" stroke="none"/>
</g>
<path transform="translate(643.80 1666.60) scale(2.0833)" fill="#2196f3" d="M7 14H5v5h5v-2H7v-3zm-2-4h2V7h3V5H5v5zm12 7h-3v2h5v-5h-2v3zM14 5v2h3v3h2V5h-5z"/>
<path transform="translate(710.70 1666.60) scale(2.0833)" fill="#2196f3" d="M3 17h18v-2H3v2zm0 3h18v-1H3v1zm0-7h18v-3H3v3zm0-9v4h18V4H3z"/>
<path transform="translate(777.30 1666.60) scale(2.0833)" fill="#2196f3" d="M12.01 5.5L10 8h4l-1.99-2.5zM18 10v4l2.5-1.99L18 10zM6 10l-2.5 2.01L6 14v-4zm8 6h-4l2.01 2.5L14 16zm7-13H3c-1.1 0-2 .9-2 2v14c0 1.1.9 2 2 2h18c1.1 0 2-.9 2-2V5c0-1.1-.9-2-2-2zm0 16.01H3V4.99h18v14.02z"/>
<text x="1343.9" y="1182.1" font-size="25" fill="#212121" textLength="271.0" lengthAdjust="spacingAndGlyphs">rollout/ep_rew_mean</text>
<text x="1343.9" y="1214.2" font-size="22.9" fill="#212121" textLength="281.0" lengthAdjust="spacingAndGlyphs">tag: rollout/ep_rew_mean</text>
<path clip-path="url(#gp3)" d="M1451.3 1242.3V1620.6M1495.9 1242.3V1620.6M1540.6 1242.3V1620.6M1585.2 1242.3V1620.6M1629.8 1242.3V1620.6M1674.5 1242.3V1620.6M1719.1 1242.3V1620.6M1763.7 1242.3V1620.6M1808.3 1242.3V1620.6M1853.0 1242.3V1620.6M1897.6 1242.3V1620.6M1942.2 1242.3V1620.6M1986.9 1242.3V1620.6M2031.5 1242.3V1620.6M1440.7 1242.3H2031.5M1440.7 1273.0H2031.5M1440.7 1303.6H2031.5M1440.7 1334.3H2031.5M1440.7 1365.0H2031.5M1440.7 1395.7H2031.5M1440.7 1426.3H2031.5M1440.7 1457.0H2031.5M1440.7 1487.7H2031.5M1440.7 1518.3H2031.5M1440.7 1549.0H2031.5M1440.7 1579.7H2031.5M1440.7 1610.3H2031.5" fill="none" stroke="#3c3c3c" stroke-opacity="0.235" stroke-width="1.9"/>
<path d="M1495.9 1242.3V1610.3M1451.3 1549.0H2031.5" fill="none" stroke="#959595" stroke-width="2.7"/>
<text x="1430.1" y="1280.6" font-size="25" fill="#565656" text-anchor="end">900</text>
<text x="1430.1" y="1341.9" font-size="25" fill="#565656" text-anchor="end">700</text>
<text x="1430.1" y="1403.2" font-size="25" fill="#565656" text-anchor="end">500</text>
<text x="1430.1" y="1464.6" font-size="25" fill="#565656" text-anchor="end">300</text>
<text x="1430.1" y="1525.9" font-size="25" fill="#565656" text-anchor="end">100</text>
<text x="1430.1" y="1587.3" font-size="25" fill="#565656" text-anchor="end">-100</text>
<text x="1495.9" y="1650.9" font-size="25" fill="#565656" text-anchor="middle">0</text>
<text x="1585.2" y="1650.9" font-size="25" fill="#565656" text-anchor="middle">20k</text>
<text x="1674.5" y="1650.9" font-size="25" fill="#565656" text-anchor="middle">40k</text>
<text x="1763.7" y="1650.9" font-size="25" fill="#565656" text-anchor="middle">60k</text>
<text x="1853.0" y="1650.9" font-size="25" fill="#565656" text-anchor="middle">80k</text>
<text x="1942.2" y="1650.9" font-size="25" fill="#565656" text-anchor="middle">100k</text>
<g clip-path="url(#cp3)" fill="none" stroke-linejoin="miter" stroke-miterlimit="6">
<polyline points="1505.8,1592.3 1513.9,1587.9 1523.0,1585.6 1532.2,1585.4 1540.7,1584.5 1549.5,1584.0 1558.6,1583.5 1567.8,1583.1 1586.2,1582.6 1613.8,1582.4 1636.8,1582.2 1659.7,1581.9 1682.7,1581.5 1705.7,1580.8 1728.6,1580.1 1730.0,1580.3 1753.0,1579.4 1779.4,1578.7" stroke="#33bbee" stroke-opacity="0.2" stroke-width="3.3"/>
<polyline points="1505.1,1542.9 1513.9,1527.5 1523.0,1530.9 1532.2,1526.8 1540.7,1528.6 1549.5,1526.3 1558.6,1525.2 1567.8,1524.1 1577.0,1519.5 1586.2,1516.0 1595.4,1510.3 1604.6,1505.2 1613.8,1502.2 1623.0,1497.6 1629.9,1488.4 1641.3,1491.4 1650.5,1480.4 1659.7,1475.8 1668.9,1462.0 1678.1,1460.9 1689.6,1457.4 1696.5,1450.5 1705.7,1434.5 1714.9,1418.4 1724.1,1412.6 1730.0,1404.6 1739.2,1390.8 1748.4,1372.4 1755.3,1360.9 1764.5,1349.5 1771.4,1340.3 1780.5,1327.6 1789.7,1319.6 1798.9,1316.8 1808.1,1312.2 1815.0,1300.1 1824.2,1292.0 1833.4,1280.5 1842.6,1270.2 1851.8,1264.5 1860.9,1253.0 1870.1,1246.1 1879.3,1242.6 1888.5,1242.6 1897.7,1246.1 1906.9,1246.1 1916.1,1251.8 1925.3,1259.9 1934.5,1266.8 1943.6,1272.5 1952.8,1271.4 1962.0,1269.5 1971.2,1269.5 1975.8,1275.9 1980.4,1288.6" stroke="#0077bb" stroke-opacity="0.2" stroke-width="3.3"/>
<polyline points="1505.1,1544.3 1513.9,1559.0 1523.0,1556.2 1532.2,1557.4 1540.7,1556.2 1549.5,1559.7 1558.6,1556.2 1567.8,1553.9 1577.0,1552.8 1586.2,1552.8 1595.4,1549.3 1604.6,1543.6 1613.8,1539.7 1623.0,1538.5 1629.9,1531.4 1641.3,1528.2 1650.5,1524.1 1659.7,1525.2 1668.9,1525.2 1678.1,1521.8 1687.3,1511.4 1696.5,1506.8 1705.7,1504.5 1714.9,1510.3 1724.1,1501.1 1730.0,1498.8 1741.5,1490.7 1750.7,1479.3 1759.9,1471.2 1769.1,1460.9 1778.2,1451.7 1787.4,1447.1 1796.6,1439.1 1808.1,1433.3 1821.9,1434.5 1831.1,1429.9 1842.6,1425.7 1854.1,1425.7 1865.5,1425.7 1877.0,1421.8 1888.5,1420.7 1897.7,1417.2 1906.9,1417.9 1916.1,1413.8 1925.3,1414.9 1936.8,1415.6 1945.9,1414.9 1955.1,1414.2 1964.3,1414.9 1980.4,1416.1" stroke="#cc3311" stroke-opacity="0.2" stroke-width="3.3"/>
<polyline points="1505.8,1592.3 1513.9,1590.0 1523.0,1587.7 1532.2,1586.5 1540.7,1585.4 1549.5,1584.5 1558.6,1583.8 1567.8,1583.3 1586.2,1582.9 1613.8,1582.6 1636.8,1582.4 1659.7,1582.2 1682.7,1581.7 1705.7,1581.3 1728.6,1580.6 1730.0,1580.8 1753.0,1579.9 1779.4,1579.2" stroke="#33bbee" stroke-width="4.2"/>
<polyline points="1505.1,1544.3 1513.9,1552.3 1523.0,1554.4 1532.2,1555.8 1540.7,1555.8 1549.5,1556.9 1558.6,1556.2 1567.8,1555.5 1577.0,1554.6 1586.2,1554.4 1595.4,1553.2 1604.6,1550.9 1613.8,1548.6 1623.0,1546.6 1632.2,1543.1 1641.3,1539.7 1650.5,1536.0 1659.7,1533.2 1668.9,1530.9 1678.1,1528.2 1687.3,1524.5 1696.5,1520.6 1705.7,1517.2 1714.9,1514.9 1724.1,1511.0 1730.0,1508.4 1739.2,1504.8 1748.4,1499.9 1757.6,1493.7 1766.8,1486.1 1775.9,1478.1 1785.1,1470.1 1796.6,1460.9 1808.1,1453.3 1819.6,1447.8 1831.1,1443.2 1842.6,1438.6 1854.1,1434.9 1865.5,1432.2 1877.0,1429.4 1888.5,1426.9 1900.0,1424.3 1909.2,1422.5 1918.4,1420.7 1927.6,1419.5 1936.8,1418.8 1945.9,1418.4 1955.1,1417.9 1964.3,1417.7 1980.4,1417.2" stroke="#cc3311" stroke-width="4.2"/>
<polyline points="1505.1,1542.9 1513.9,1535.1 1523.0,1533.2 1532.2,1530.9 1540.7,1530.5 1549.5,1529.3 1558.6,1528.2 1567.8,1527.0 1577.0,1524.7 1586.2,1522.2 1595.4,1519.0 1604.6,1515.6 1613.8,1512.1 1623.0,1508.7 1632.2,1504.5 1641.3,1501.1 1650.5,1496.5 1659.7,1491.4 1666.6,1486.1 1674.4,1480.9 1682.7,1476.5 1689.6,1472.4 1696.5,1467.8 1703.4,1462.0 1710.3,1455.1 1717.2,1448.2 1724.1,1440.9 1730.0,1434.0 1739.2,1422.1 1748.4,1408.0 1757.6,1394.3 1766.8,1380.5 1775.9,1367.8 1785.1,1356.3 1796.6,1344.9 1808.1,1334.5 1819.6,1321.9 1831.1,1310.4 1842.6,1298.9 1854.1,1287.4 1865.5,1275.9 1877.0,1266.8 1888.5,1259.9 1900.0,1255.3 1909.2,1253.0 1918.4,1252.5 1927.6,1254.8 1936.8,1258.0 1945.9,1261.0 1955.1,1263.3 1964.3,1264.5 1971.2,1265.6 1980.4,1271.8" stroke="#0077bb" stroke-width="4.2"/>
<circle cx="1779.4" cy="1579.2" r="8.2" fill="#33bbee" stroke="none"/>
<circle cx="1980.4" cy="1417.2" r="8.2" fill="#cc3311" stroke="none"/>
<circle cx="1980.4" cy="1271.8" r="8.2" fill="#0077bb" stroke="none"/>
</g>
<path transform="translate(1352.30 1666.60) scale(2.0833)" fill="#2196f3" d="M7 14H5v5h5v-2H7v-3zm-2-4h2V7h3V5H5v5zm12 7h-3v2h5v-5h-2v3zM14 5v2h3v3h2V5h-5z"/>
<path transform="translate(1419.20 1666.60) scale(2.0833)" fill="#2196f3" d="M3 17h18v-2H3v2zm0 3h18v-1H3v1zm0-7h18v-3H3v3zm0-9v4h18V4H3z"/>
<path transform="translate(1485.80 1666.60) scale(2.0833)" fill="#2196f3" d="M12.01 5.5L10 8h4l-1.99-2.5zM18 10v4l2.5-1.99L18 10zM6 10l-2.5 2.01L6 14v-4zm8 6h-4l2.01 2.5L14 16zm7-13H3c-1.1 0-2 .9-2 2v14c0 1.1.9 2 2 2h18c1.1 0 2-.9 2-2V5c0-1.1-.9-2-2-2zm0 16.01H3V4.99h18v14.02z"/>
</svg></body></html>
